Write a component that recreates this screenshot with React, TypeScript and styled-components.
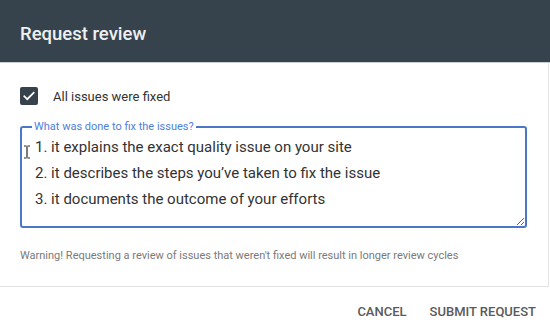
import { createGlobalStyle, styled } from "styled-components";

const GlobalStyle = createGlobalStyle`
  html, body {
    margin: 0;
    padding: 0;
    background: #ffffff;
  }
  body {
    font-family: Roboto, "Liberation Sans", Arial, sans-serif;
  }
`;

const App = () => {
  return (
    <>
      <GlobalStyle />
      <Dialog>
        <Header>
          <Title>Request review</Title>
        </Header>
        <Body>
          <CheckRow>
            <CheckBox>
              <svg width="14" height="14" viewBox="0 0 24 24">
                <path
                  d="M4 12.5l5 5L20 6.5"
                  fill="none"
                  stroke="#ffffff"
                  strokeWidth="3"
                  strokeLinecap="square"
                />
              </svg>
            </CheckBox>
            <CheckLabel>All issues were fixed</CheckLabel>
          </CheckRow>
          <Field>
            <Legend>What was done to fix the issues?</Legend>
            <TextArea
              defaultValue={
                "1. it explains the exact quality issue on your site\n2. it describes the steps you\u2019ve taken to fix the issue\n3. it documents the outcome of your efforts"
              }
            />
            {/* mouse text cursor over the field */}
            <Cursor width="8" height="14" viewBox="0 0 8 14">
              <path
                d="M1 1h2.5M4.5 1H7M4 1.5v11M1 13h2.5M4.5 13H7"
                stroke="#222"
                strokeWidth="1.2"
                fill="none"
              />
            </Cursor>
          </Field>
          <Warning>
            Warning! Requesting a review of issues that weren't fixed will result in longer review cycles
          </Warning>
        </Body>
        <Footer>
          <TextButton>Cancel</TextButton>
          <TextButton>Submit request</TextButton>
        </Footer>
      </Dialog>
    </>
  );
};

export default App;

const Dialog = styled.div`
  width: 550px;
  height: 333px;
  display: flex;
  flex-direction: column;
  background: #ffffff;
  overflow: hidden;
`;

const Header = styled.div`
  height: 62px;
  display: flex;
  align-items: center;
  padding: 0 20px;
  background: #37434c;
  border-bottom: 1px solid #c9d1d6;
`;

const Title = styled.h1`
  margin: 0;
  margin-top: 6px;
  font-size: 18.5px;
  font-weight: 500;
  color: #eef0f2;
`;

const Body = styled.div`
  flex: 1;
  display: flex;
  flex-direction: column;
  padding: 24px 0 0 20px;
  margin-right: 1px;
  border-right: 1px solid #e4e6e8;
  border-bottom: 1px solid #e2e2e2;
`;

const CheckRow = styled.div`
  display: flex;
  align-items: center;
  gap: 15px;
`;

const CheckBox = styled.div`
  width: 18px;
  height: 18px;
  border-radius: 2px;
  background: #37434c;
  display: flex;
  align-items: center;
  justify-content: center;
`;

const CheckLabel = styled.span`
  font-size: 13px;
  color: #333333;
`;

const Field = styled.fieldset`
  position: relative;
  margin: 16px 21px 0 0;
  padding: 0;
  border: 2px solid #4b77cb;
  border-radius: 3px;
  display: flex;
`;

const Legend = styled.legend`
  margin-left: 10px;
  padding: 0 2px;
  font-size: 11px;
  line-height: 12px;
  color: #4f80d8;
`;

const TextArea = styled.textarea`
  flex: 1;
  height: 92px;
  margin: 0;
  padding: 1px 12px 0 13px;
  border: none;
  outline: none;
  resize: vertical;
  font-family: Roboto, "Liberation Sans", Arial, sans-serif;
  font-size: 15px;
  line-height: 26px;
  color: #333333;
  background: transparent;
`;

const Cursor = styled.svg`
  position: absolute;
  left: 1px;
  top: 12px;
`;

const Warning = styled.p`
  margin: 21px 0 0;
  font-size: 11px;
  color: #7a7a7a;
`;

const Footer = styled.div`
  height: 43px;
  display: flex;
  align-items: center;
  justify-content: flex-end;
  gap: 23px;
  padding: 3px 14px 0 0;
`;

const TextButton = styled.button`
  padding: 0;
  border: none;
  background: none;
  font-family: Roboto, "Liberation Sans", Arial, sans-serif;
  font-size: 13px;
  font-weight: 500;
  text-transform: uppercase;
  color: #5a5a5a;
  cursor: pointer;
`;
